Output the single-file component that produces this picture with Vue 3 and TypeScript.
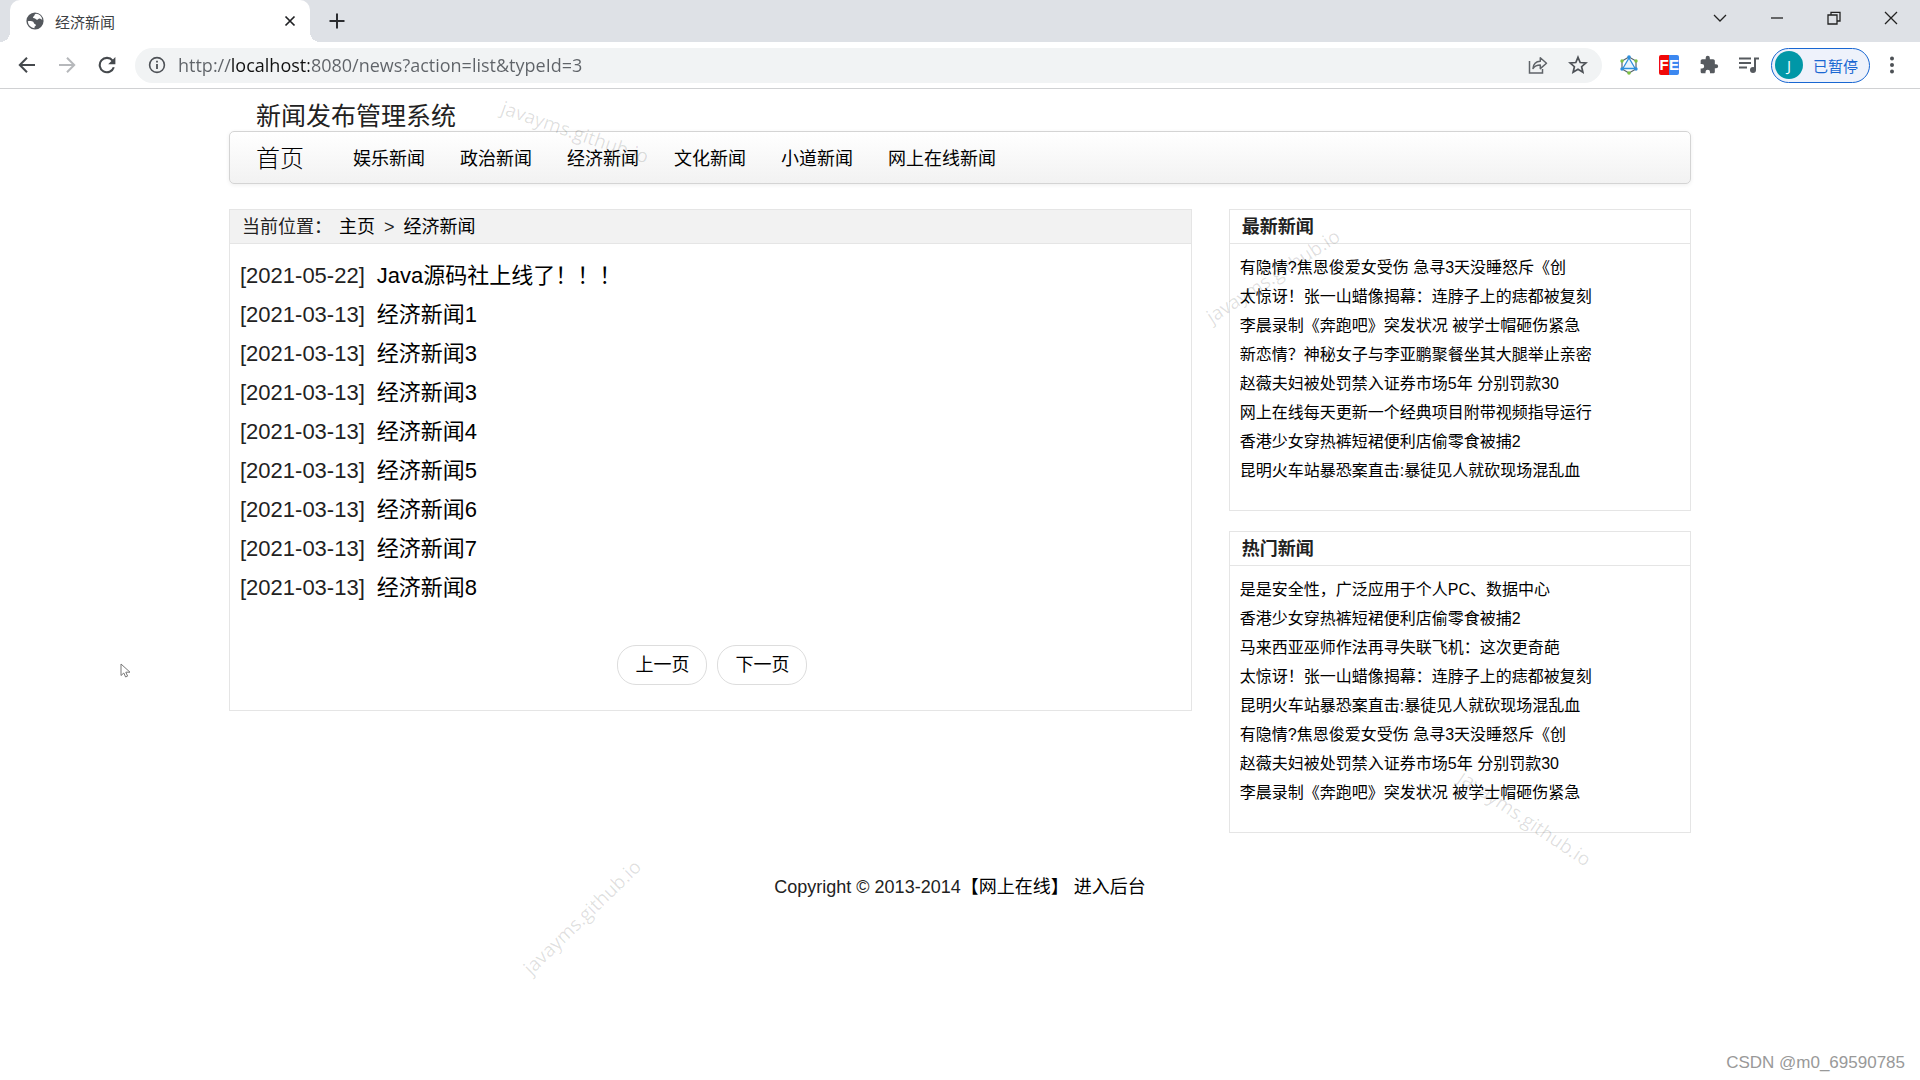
<script setup lang="ts">
import { ref } from 'vue'

interface NewsItem {
  date: string
  title: string
}

interface SidePanel {
  title: string
  items: string[]
}

const address = ref('http://localhost:8080/news?action=list&typeId=3')

const categories: string[] = ['娱乐新闻', '政治新闻', '经济新闻', '文化新闻', '小道新闻', '网上在线新闻']

const news: NewsItem[] = [
  { date: '2021-05-22', title: 'Java源码社上线了！！！' },
  { date: '2021-03-13', title: '经济新闻1' },
  { date: '2021-03-13', title: '经济新闻3' },
  { date: '2021-03-13', title: '经济新闻3' },
  { date: '2021-03-13', title: '经济新闻4' },
  { date: '2021-03-13', title: '经济新闻5' },
  { date: '2021-03-13', title: '经济新闻6' },
  { date: '2021-03-13', title: '经济新闻7' },
  { date: '2021-03-13', title: '经济新闻8' },
]

const panels: SidePanel[] = [
  {
    title: '最新新闻',
    items: [
      '有隐情?焦恩俊爱女受伤 急寻3天没睡怒斥《创',
      '太惊讶！张一山蜡像揭幕：连脖子上的痣都被复刻',
      '李晨录制《奔跑吧》突发状况 被学士帽砸伤紧急',
      '新恋情？神秘女子与李亚鹏聚餐坐其大腿举止亲密',
      '赵薇夫妇被处罚禁入证券市场5年 分别罚款30',
      '网上在线每天更新一个经典项目附带视频指导运行',
      '香港少女穿热裤短裙便利店偷零食被捕2',
      '昆明火车站暴恐案直击:暴徒见人就砍现场混乱血',
    ],
  },
  {
    title: '热门新闻',
    items: [
      '是是安全性，广泛应用于个人PC、数据中心',
      '香港少女穿热裤短裙便利店偷零食被捕2',
      '马来西亚巫师作法再寻失联飞机：这次更奇葩',
      '太惊讶！张一山蜡像揭幕：连脖子上的痣都被复刻',
      '昆明火车站暴恐案直击:暴徒见人就砍现场混乱血',
      '有隐情?焦恩俊爱女受伤 急寻3天没睡怒斥《创',
      '赵薇夫妇被处罚禁入证券市场5年 分别罚款30',
      '李晨录制《奔跑吧》突发状况 被学士帽砸伤紧急',
    ],
  },
]
</script>

<template>
  <div class="window">
    <header class="chrome">
      <div class="tabstrip">
        <div class="tab">
          <svg class="globe" viewBox="0 0 18 18" width="18" height="18" aria-hidden="true">
            <circle cx="9" cy="9" r="8.6" fill="#54585d" />
            <path d="M10 1.8c-2 .6-1 2-2.4 2.6-1.3.5-.6 1.8.6 1.8 1.4 0 1.6 1.4 2.9 1.6 1.2.2 1.2-1.4 2.6-1.2 1 .2 1.6 1 2.6 1.2A7.2 7.2 0 0 0 10 1.8zM1.8 9.2c1.8-.4 4.4-.3 5.4.6 1 1 .2 1.8 1.6 2.1 1.6.4 1.3 1.9.3 2.3-.7.3-.6 1.2-.6 2A7.2 7.2 0 0 1 1.8 9.2z" fill="#fff" />
          </svg>
          <span class="tab-title">经济新闻</span>
          <button class="icon-btn small" type="button" aria-label="关闭标签页">
            <svg viewBox="0 0 12 12" width="12" height="12"><path d="M1.5 1.5l9 9M10.5 1.5l-9 9" stroke="#202124" stroke-width="1.7" /></svg>
          </button>
        </div>
        <button class="icon-btn new-tab" type="button" aria-label="新标签页">
          <svg viewBox="0 0 16 16" width="16" height="16"><path d="M8 .5v15M.5 8h15" stroke="#2b2d30" stroke-width="2" /></svg>
        </button>
        <div class="win-controls">
          <button type="button" aria-label="搜索标签页"><svg viewBox="0 0 14 14" width="14" height="14"><path d="M1 4l6 6 6-6" /></svg></button>
          <button type="button" aria-label="最小化"><svg viewBox="0 0 14 14" width="14" height="14"><path d="M1 7h12" /></svg></button>
          <button type="button" aria-label="还原"><svg viewBox="0 0 14 14" width="14" height="14"><path d="M1 4h9v9H1zM4 4V1.4h9V10h-3" /></svg></button>
          <button type="button" aria-label="关闭"><svg viewBox="0 0 14 14" width="14" height="14"><path d="M1 1l12 12M13 1L1 13" /></svg></button>
        </div>
      </div>

      <div class="toolbar">
        <div class="nav-buttons">
          <button class="icon-btn" type="button" aria-label="后退">
            <svg viewBox="0 0 18 18" width="18" height="18"><path d="M17 9H2M9 1.8L1.8 9 9 16.2" fill="none" stroke="#45494d" stroke-width="2" /></svg>
          </button>
          <button class="icon-btn" type="button" aria-label="前进">
            <svg viewBox="0 0 18 18" width="18" height="18"><path d="M1 9h15M9 1.8L16.2 9 9 16.2" fill="none" stroke="#b6b8bb" stroke-width="2" /></svg>
          </button>
          <button class="icon-btn" type="button" aria-label="重新加载">
            <svg viewBox="0 0 18 18" width="18" height="18">
              <path d="M15.8 11.2A7.2 7.2 0 1 1 14.6 4.6" fill="none" stroke="#45494d" stroke-width="2.1" />
              <path d="M17.4 1v7.2h-7.2z" fill="#45494d" />
            </svg>
          </button>
        </div>

        <div class="omnibox">
          <svg viewBox="0 0 18 18" width="18" height="18" aria-hidden="true">
            <circle cx="9" cy="9" r="7.4" fill="none" stroke="#4d5156" stroke-width="1.6" />
            <path d="M9 8v5M9 4.8v1.8" stroke="#4d5156" stroke-width="1.8" />
          </svg>
          <input v-model="address" class="address" type="text" aria-label="地址栏" spellcheck="false" />
          <button class="icon-btn" type="button" aria-label="分享">
            <svg viewBox="0 0 20 20" width="20" height="20" fill="none" stroke="#5f6368" stroke-width="1.5">
              <path d="M1.5 6v12h13v-4" />
              <path d="M5 13.5c.4-4.6 2.7-7 7.3-7.2V2.8l6.2 5.4-6.2 5.4V10c-3.5 0-5.6 1-7.3 3.5z" stroke-linejoin="round" />
            </svg>
          </button>
          <button class="icon-btn" type="button" aria-label="添加书签">
            <svg viewBox="0 0 20 20" width="20" height="20"><path d="M10 2.3l2.2 5.2 5.7.5-4.3 3.7 1.3 5.5-4.9-2.9-4.9 2.9 1.3-5.5L2.1 8l5.7-.5z" fill="none" stroke="#4d5156" stroke-width="1.7" /></svg>
          </button>
        </div>

        <div class="extensions">
          <button class="icon-btn" type="button" aria-label="扩展程序">
            <svg viewBox="0 0 20 20" width="20" height="20">
              <path d="M10 2l7 4v8l-7 4-7-4V6z" fill="none" stroke="#56656e" stroke-width="1.2" />
              <path d="M10 3l6.2 10.5H3.8z" fill="#e9f4fc" stroke="#2d8fdd" stroke-width="1.3" />
              <circle cx="10" cy="2" r="1.8" fill="#2d8fdd" /><circle cx="17" cy="6" r="1.7" fill="#7dc242" /><circle cx="17" cy="14" r="1.7" fill="#2d8fdd" />
              <circle cx="10" cy="18" r="1.8" fill="#7dc242" /><circle cx="3" cy="14" r="1.7" fill="#2d8fdd" /><circle cx="3" cy="6" r="1.7" fill="#7dc242" />
            </svg>
          </button>
          <button class="icon-btn fe" type="button" aria-label="FeHelper"><span class="fe-left">F</span><span class="fe-right">E</span></button>
          <button class="icon-btn" type="button" aria-label="管理扩展程序">
            <svg viewBox="0 0 24 24" width="20" height="20"><path d="M20.5 11H19V7c0-1.100-.9-2-2-2h-4V3.500a2.500 2.500 0 0 0-5 0V5H4c-1.100 0-2 .9-2 2v3.800h1.500a2.700 2.700 0 0 1 0 5.400H2V20c0 1.100.9 2 2 2h3.800v-1.500a2.700 2.700 0 0 1 5.400 0V22H17c1.100 0 2-.9 2-2v-4h1.500a2.500 2.500 0 0 0 0-5z" fill="#565a5f" /></svg>
          </button>
          <button class="icon-btn" type="button" aria-label="媒体控件">
            <svg viewBox="0 0 20 18" width="20" height="18">
              <path d="M0 2.500h12M0 7h12M0 11.500h8M16 14V2.500h4" fill="none" stroke="#565a5f" stroke-width="2" />
              <circle cx="14" cy="14" r="3" fill="#565a5f" />
            </svg>
          </button>
        </div>

        <button class="profile" type="button"><span class="avatar">J</span><span>已暂停</span></button>

        <button class="icon-btn" type="button" aria-label="菜单">
          <svg viewBox="0 0 4 18" width="4" height="18" fill="#4d5156"><circle cx="2" cy="2.5" r="2" /><circle cx="2" cy="9" r="2" /><circle cx="2" cy="15.5" r="2" /></svg>
        </button>
      </div>
    </header>

    <div class="page">
      <div class="container">
        <h1 class="site-title">新闻发布管理系统</h1>
        <nav class="navbar">
          <a class="home" href="#">首页</a>
          <a v-for="name in categories" :key="name" href="#">{{ name }}</a>
        </nav>

        <div class="columns">
          <main class="panel">
            <div class="panel-head crumbs">
              <span>当前位置：</span>
              <a href="#">主页</a>
              <span class="sep">&gt;</span>
              <a href="#">经济新闻</a>
            </div>
            <ul class="news-list">
              <li v-for="(item, i) in news" :key="i">
                <span>[{{ item.date }}]</span>
                <a href="#">{{ item.title }}</a>
              </li>
            </ul>
            <div class="pager">
              <a href="#">上一页</a>
              <a href="#">下一页</a>
            </div>
          </main>

          <aside class="sidebar">
            <section v-for="panel in panels" :key="panel.title" class="panel">
              <h2 class="panel-head">{{ panel.title }}</h2>
              <ul class="side-list">
                <li v-for="item in panel.items" :key="item"><a href="#">{{ item }}</a></li>
              </ul>
            </section>
          </aside>
        </div>

        <footer class="footer">Copyright © 2013-2014<a href="#">【网上在线】</a> <a href="#">进入后台</a></footer>
      </div>

      <span class="mark mark-a">javayms.github.io</span>
      <span class="mark mark-b">javayms.github.io</span>
      <span class="mark mark-c">javayms.github.io</span>
      <span class="mark mark-d">javayms.github.io</span>
      <span class="credit">CSDN @m0_69590785</span>
      <svg class="pointer" viewBox="0 0 11 15" width="11" height="15" aria-hidden="true">
        <path d="M1 1v11.500l2.800-2.500 1.800 4 2-.9-1.800-3.900H10z" fill="#fff" stroke="#777" stroke-width="1" />
      </svg>
    </div>
  </div>
</template>

<style>
body {
  margin: 0;
  background: #fff;
}
</style>

<style scoped>
.window {
  display: flex;
  flex-direction: column;
  min-height: 100vh;
  font-family: "Liberation Sans", "Noto Sans CJK SC", sans-serif;
  color: #222;
}

.window * {
  box-sizing: border-box;
}

button {
  border: 0;
  padding: 0;
  background: none;
  font: inherit;
}

svg {
  display: block;
  flex: none;
}

a {
  color: #000;
  text-decoration: none;
}

ul {
  margin: 0;
  padding: 0;
  list-style: none;
}

/* Browser frame */
.chrome {
  border-bottom: 1px solid #d0d1d3;
  font-family: "Open Sans", "Noto Sans CJK SC", sans-serif;
}

.tabstrip {
  display: flex;
  height: 42px;
  padding: 0 1px 0 10px;
  background: #dee1e6;
}

.tab {
  position: relative;
  display: flex;
  align-items: center;
  width: 300px;
  padding: 0 10px 0 16px;
  border-radius: 10px 10px 0 0;
  background: #fff;
}

.tab::before,
.tab::after {
  content: "";
  position: absolute;
  bottom: 0;
  width: 10px;
  height: 10px;
}

.tab::before {
  right: 100%;
  background: radial-gradient(circle at 0 0, transparent 10px, #fff 10px);
}

.tab::after {
  left: 100%;
  background: radial-gradient(circle at 100% 0, transparent 10px, #fff 10px);
}

.tab-title {
  flex: 1;
  margin-left: 11px;
  font-size: 15px;
  color: #3c4043;
}

.icon-btn {
  display: flex;
  flex: none;
  align-items: center;
  justify-content: center;
  width: 40px;
  height: 34px;
}

.icon-btn.small {
  width: 20px;
}

.new-tab {
  align-self: center;
  margin-left: 7px;
}

.win-controls {
  display: flex;
  height: 36px;
  margin-left: auto;
}

.win-controls button {
  display: flex;
  align-items: center;
  justify-content: center;
  width: 57px;
}

.win-controls path {
  fill: none;
  stroke: #222;
  stroke-width: 1.3;
}

.toolbar {
  display: flex;
  align-items: center;
  height: 46px;
  padding: 0 8px 0 7px;
  background: #fff;
}

.nav-buttons,
.extensions {
  display: flex;
}

.omnibox {
  display: flex;
  flex: 1;
  align-items: center;
  height: 35px;
  margin-right: 7px;
  margin-left: 8px;
  padding: 0 4px 0 13px;
  border-radius: 18px;
  background: #f1f3f4;
}

.address {
  flex: 1;
  min-width: 0;
  height: 30px;
  margin-left: 12px;
  padding: 0;
  border: 0;
  outline: 0;
  background: linear-gradient(90deg, #5f6368 53px, #111 53px, #111 131px, #5f6368 131px);
  background-clip: text;
  font-family: "Open Sans", "Noto Sans CJK SC", sans-serif;
  font-size: 18px;
  color: #5f6368;
  -webkit-text-fill-color: transparent;
}

.fe {
  font-family: "Liberation Sans", sans-serif;
  font-size: 15px;
  font-weight: 700;
  line-height: 20px;
  color: #fff;
}

.fe-left,
.fe-right {
  width: 10px;
  height: 20px;
}

.fe-left {
  border-radius: 2px 0 0 2px;
  background: #f00909;
}

.fe-right {
  border-radius: 0 2px 2px 0;
  background: #3c88f0;
}

.profile {
  display: flex;
  align-items: center;
  gap: 10px;
  height: 35px;
  margin: 0 2px;
  padding: 0 11px 0 3px;
  border: 1px solid #1967d2;
  border-radius: 18px;
  background: #eef2fb;
  font-size: 15px;
  color: #1967d2;
}

.avatar {
  width: 28px;
  height: 28px;
  border-radius: 50%;
  background: #0097a7;
  line-height: 28px;
  text-align: center;
  color: #fff;
}

/* Page */
.page {
  position: relative;
  flex: 1;
  overflow: hidden;
}

.container {
  width: calc(100% - 48px);
  max-width: 1462px;
  margin: 0 auto;
}

.site-title {
  margin: 0;
  padding: 12px 27px 0;
  font-size: 25px;
  font-weight: 400;
  line-height: 30px;
}

.navbar {
  display: flex;
  align-items: center;
  gap: 35px;
  height: 53px;
  padding: 0 26px 2px;
  border: 1px solid #d4d4d4;
  border-radius: 5px;
  background: linear-gradient(#fff, #f2f2f2);
  box-shadow: 0 1px 4px rgba(0, 0, 0, 0.07);
  font-size: 18px;
}

.home {
  margin-right: 14px;
  font-size: 24px;
  font-weight: 300;
}

.columns {
  display: grid;
  grid-template-columns: minmax(0, 25fr) minmax(0, 12fr);
  align-items: start;
  gap: 37px;
  margin-top: 25px;
}

.panel {
  border: 1px solid #e5e5e5;
}

.panel-head {
  height: 34px;
  margin: 0;
  padding: 0 12px;
  border-bottom: 1px solid #e5e5e5;
  font-size: 18px;
  font-weight: 700;
  line-height: 35px;
}

.crumbs {
  display: flex;
  background: #f2f2f2;
  font-weight: 400;
}

.crumbs span:first-child {
  margin-right: 7px;
}

.crumbs .sep {
  margin: 0 9px;
}

.news-list {
  padding: 12px 10px 0;
  font-size: 22px;
  line-height: 39px;
}

.news-list li {
  display: flex;
  gap: 12px;
}

.pager {
  display: flex;
  justify-content: center;
  gap: 10px;
  padding: 38px 0 25px 4px;
}

.pager a {
  width: 90px;
  height: 40px;
  border: 1px solid #ddd;
  border-radius: 19px;
  font-size: 18px;
  line-height: 38px;
  text-align: center;
}

.sidebar {
  display: grid;
  gap: 20px;
}

.side-list {
  padding: 9px 10px 25px;
  font-size: 16px;
  line-height: 29px;
}

.side-list li {
  overflow: hidden;
  text-overflow: ellipsis;
  white-space: nowrap;
}

.footer {
  margin-top: 41px;
  font-size: 18px;
  line-height: 26px;
  text-align: center;
}

/* Overlays */
.mark {
  position: absolute;
  width: 160px;
  font-family: "Open Sans", sans-serif;
  font-size: 19px;
  line-height: 24px;
  text-align: center;
  white-space: nowrap;
  color: rgba(0, 0, 0, 0.13);
  pointer-events: none;
}

.mark-a {
  top: 31px;
  left: 495px;
  transform: rotate(19deg);
}

.mark-b {
  top: 175px;
  left: 1193px;
  transform: rotate(-33deg);
}

.mark-c {
  top: 717px;
  left: 1445px;
  transform: rotate(34deg);
}

.mark-d {
  top: 816px;
  left: 502px;
  transform: rotate(-44deg);
}

.credit {
  position: absolute;
  right: 15px;
  bottom: 7px;
  font-size: 17px;
  line-height: 20px;
  color: #999;
}

.pointer {
  position: absolute;
  top: 574px;
  left: 120px;
}
</style>
